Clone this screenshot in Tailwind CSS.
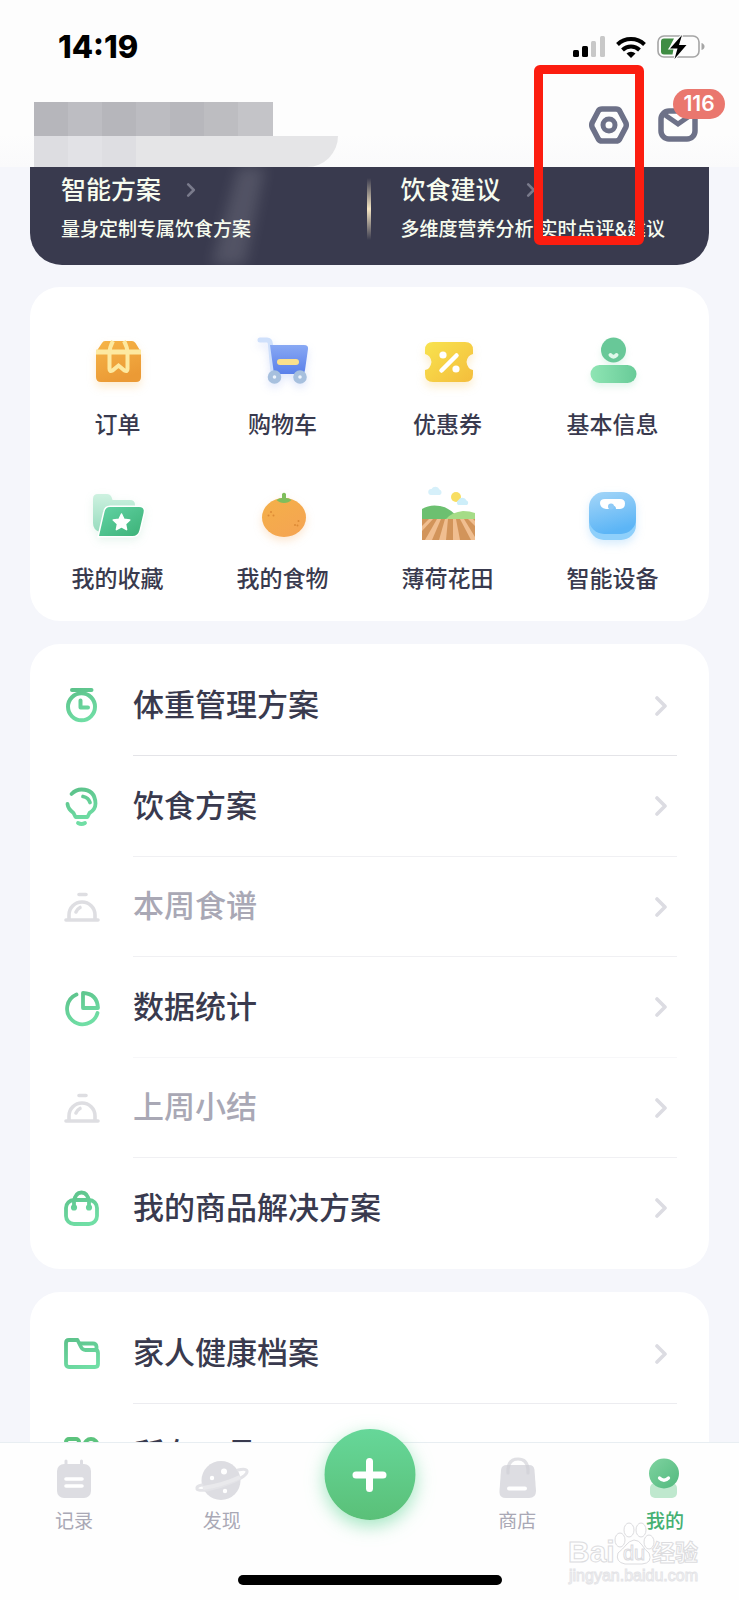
<!DOCTYPE html>
<html lang="zh-CN">
<head>
    <meta charset="UTF-8">
    <meta name="viewport" content="width=device-width, initial-scale=1.0">
    <title>我的</title>
    <script src="https://cdn.jsdelivr.net/npm/@tailwindcss/browser@4"></script>
</head>
<body class="bg-[#f5f6fb] font-['Inter','Noto_Sans_CJK_SC',sans-serif] text-[#393a4e]">
    <!-- Shared gradients and symbols -->
    <svg class="absolute w-0 h-0" aria-hidden="true">
        <defs>
            <linearGradient id="gOrange" x1="0" y1="0" x2="0.4" y2="1"><stop offset="0" stop-color="#f6b548"/><stop offset="1" stop-color="#eb9a35"/></linearGradient>
            <linearGradient id="gBlue" x1="0" y1="0" x2="0" y2="1"><stop offset="0" stop-color="#88a8f4"/><stop offset="1" stop-color="#5a80ea"/></linearGradient>
            <linearGradient id="gYellow" x1="0" y1="0" x2="1" y2="1"><stop offset="0" stop-color="#f8e34e"/><stop offset="1" stop-color="#f4bd3c"/></linearGradient>
            <linearGradient id="gMint" x1="0" y1="0" x2="1" y2="0"><stop offset="0" stop-color="#8fe5b4"/><stop offset="1" stop-color="#68cb98"/></linearGradient>
            <linearGradient id="gFolder" x1="0" y1="0" x2="1" y2="1"><stop offset="0" stop-color="#62d3a4"/><stop offset="1" stop-color="#3cb177"/></linearGradient>
            <linearGradient id="gFolderBack" x1="0" y1="0" x2="0" y2="1"><stop offset="0" stop-color="#cdf1e0"/><stop offset="1" stop-color="#97dcbe"/></linearGradient>
            <linearGradient id="gFruit" x1="0" y1="0" x2="0.7" y2="1"><stop offset="0" stop-color="#f4b048"/><stop offset="1" stop-color="#f5a552"/></linearGradient>
            <linearGradient id="gScale" x1="0" y1="0" x2="0.3" y2="1"><stop offset="0" stop-color="#a5d6f8"/><stop offset="1" stop-color="#5cb5f6"/></linearGradient>
            <linearGradient id="gLine" gradientUnits="userSpaceOnUse" x1="0" y1="0" x2="14" y2="36"><stop offset="0" stop-color="#5abf88"/><stop offset="1" stop-color="#70dea5"/></linearGradient>
            <linearGradient id="gMe" x1="0" y1="0" x2="1" y2="1"><stop offset="0" stop-color="#7fd3a0"/><stop offset="1" stop-color="#52b97e"/></linearGradient>
        </defs>
        <symbol id="chevron" viewBox="0 0 12 20">
            <path d="M2 2l8 8-8 8" fill="none" stroke="currentColor" stroke-width="3.600" stroke-linecap="round" stroke-linejoin="round"/>
        </symbol>
        <symbol id="cloche" viewBox="0 0 36 36">
            <g fill="none" stroke="#dedee2" stroke-width="3.600" stroke-linecap="round">
                <path d="M2 31h32M5 30v-4a13 13 0 0 1 26 0v4"/>
                <path d="M12 23q1-3 4-4.500M15 5.500h7"/>
            </g>
        </symbol>
    </svg>

    <div class="relative flex flex-col h-screen overflow-hidden">
        <header class="shrink-0 bg-[#fdfdfd]">
            <!-- Status bar -->
            <div class="flex items-center justify-between h-[94px] pl-[58px] pr-[34px] text-black">
                <span class="text-[31px] leading-8 font-extrabold">14:19</span>
                <div class="flex items-center gap-[11px]">
                    <svg class="w-8 h-[22px]" viewBox="0 0 32 22">
                        <rect x="0" y="14" width="6" height="7" rx="1.500"/>
                        <rect x="9" y="10" width="6" height="11" rx="1.500"/>
                        <rect x="18" y="5" width="5" height="16" rx="1.500" fill="#c8c8c8"/>
                        <rect x="27" y="0" width="5" height="21" rx="1.500" fill="#c8c8c8"/>
                    </svg>
                    <svg class="w-[30px] h-[22px]" viewBox="0 0 30 22">
                        <g fill="none" stroke="#000" stroke-width="4">
                            <path d="M1.500 8.500a19.500 19.500 0 0 1 27 0"/>
                            <path d="M6.500 14a12.300 12.300 0 0 1 17 0"/>
                        </g>
                        <path d="M15 22l-4.500-4.500a6.500 6.500 0 0 1 9 0z"/>
                    </svg>
                    <svg class="w-12 h-6" viewBox="0 0 48 24">
                        <rect x="1" y="1" width="41" height="21" rx="6" fill="none" stroke="#a5a5a5" stroke-width="1.600"/>
                        <path d="M44.500 8v7q3-1 3-3.500t-3-3.500z" fill="#a5a5a5"/>
                        <path d="M7 3.500h10L11.500 14h5l-1 5.500H7q-3 0-3-3v-10q0-3 3-3z" fill="#3f8c43"/>
                        <path d="M25 0L13 13.500h7.500L17.500 24 29.500 10H22z" stroke="#fdfdfd" stroke-width="2" paint-order="stroke"/>
                    </svg>
                </div>
            </div>
            <!-- Profile row -->
            <div class="flex items-end justify-between h-[73px] pr-[41px] bg-linear-to-b from-[#fdfdfd] from-55% to-[#fafafb]">
                <div class="w-[338px] pl-[34px]">
                    <div class="flex h-[34px]">
                        <span class="w-[34px] bg-[#b6b6bb]"></span>
                        <span class="w-[34px] bg-[#bdbdc2]"></span>
                        <span class="w-[34px] bg-[#b6b6bb]"></span>
                        <span class="w-[34px] bg-[#bcbcc1]"></span>
                        <span class="w-[34px] bg-[#b7b7bc]"></span>
                        <span class="w-[34px] bg-[#bdbdc1]"></span>
                        <span class="w-[35px] bg-[#c4c4c8]"></span>
                    </div>
                    <div class="flex h-[31px] rounded-br-[32px] overflow-hidden bg-[#e5e5e7]">
                        <span class="w-[34px] bg-[#dddde1]"></span>
                        <span class="w-[34px] bg-[#e2e2e6]"></span>
                        <span class="w-[34px] bg-[#dedee2]"></span>
                    </div>
                </div>
                <div class="flex items-center gap-[29px] self-start mt-3 h-[38px]">
                    <button type="button" aria-label="设置">
                        <svg class="w-10 h-[38px]" viewBox="0 0 40 38">
                            <path d="M13 3h14q2.500 0 3.700 2l6 11.500q1.200 2.500 0 5l-6 11.500q-1.200 2-3.700 2H13q-2.500 0-3.700-2l-6-11.500q-1.200-2.500 0-5L9.300 5Q10.500 3 13 3z" fill="none" stroke="#6d7188" stroke-width="5.500"/>
                            <circle cx="20" cy="19" r="6" fill="none" stroke="#6d7188" stroke-width="5"/>
                        </svg>
                    </button>
                    <button type="button" class="relative" aria-label="消息">
                        <svg class="w-10 h-[34px]" viewBox="0 0 40 34">
                            <rect x="3" y="3" width="34" height="28" rx="8" fill="none" stroke="#6d7188" stroke-width="5.500"/>
                            <path d="M7 7l13 9 13-9" fill="none" stroke="#6d7188" stroke-width="5"/>
                        </svg>
                        <span class="absolute left-[15px] -top-[19px] w-[52px] h-[30px] rounded-full bg-[#ea776e] text-white text-[21px] leading-[30px] font-semibold text-center">116</span>
                    </button>
                </div>
            </div>
        </header>

        <main class="flex-1 overflow-hidden px-[30px]">
            <!-- Plan banner -->
            <section class="relative grid grid-cols-2 bg-[#393a4e] rounded-b-[32px] overflow-hidden pt-2 pb-[23px] text-[#f7fcef]">
                <svg class="absolute left-[165px] top-0 w-[90px] h-full blur-[7px]" viewBox="0 0 90 97" preserveAspectRatio="none">
                    <path d="M46 -10h26L48 107H14z" fill="#fff" opacity=".13"/>
                </svg>
                <div class="absolute left-1/2 top-[11px] -ml-[3px] w-1 h-[62px] bg-linear-to-b from-transparent via-[#f6e6c4] to-transparent"></div>
                <a href="#" class="relative pl-[31px]">
                    <div class="flex items-center gap-[25px] text-[25px] leading-[30px] font-medium">智能方案
                        <svg class="w-[10px] h-[14px] text-[#7a7b8c]"><use href="#chevron"/></svg>
                    </div>
                    <p class="mt-[13px] text-[19px] leading-6 font-medium">量身定制专属饮食方案</p>
                </a>
                <a href="#" class="relative pl-[31px] whitespace-nowrap">
                    <div class="flex items-center gap-[25px] text-[25px] leading-[30px] font-medium">饮食建议
                        <svg class="w-[10px] h-[14px] text-[#7a7b8c]"><use href="#chevron"/></svg>
                    </div>
                    <p class="mt-[13px] text-[19px] leading-6 font-medium">多维度营养分析 实时点评&amp;建议</p>
                </a>
            </section>

            <!-- Shortcuts -->
            <section class="grid grid-cols-4 gap-y-[45px] mt-[22px] pl-[5px] pr-[14px] pt-[45px] pb-[26px] bg-white rounded-[30px] text-[23px] leading-8 font-medium">
                <a href="#" class="flex flex-col items-center gap-[17px]">
                    <svg class="w-[60px] h-[60px] drop-shadow-[0_5px_4px_#f6b54840]" viewBox="0 0 60 60">
                        <path d="M17 9h27q2 0 3.500 2L53 20v25q0 5-5 5H13q-5 0-5-5V20l6-9q1-2 3-2z" fill="url(#gOrange)"/>
                        <path d="M8 17.500h45v5H8z" fill="#fde9a0"/>
                        <path d="M25 9q-3.500 6-3.500 13v15q0 3 3 1.500l6-5 6 5q3 1.500 3-1.500V22q0-7-3.500-13" fill="none" stroke="#fde9a0" stroke-width="4"/>
                    </svg>
                    订单
                </a>
                <a href="#" class="flex flex-col items-center gap-[17px]">
                    <svg class="w-[60px] h-[60px] drop-shadow-[0_4px_4px_#5a80ea30]" viewBox="0 0 60 60">
                        <path d="M7 8h7q3 0 3.400 4L20 40" fill="none" stroke="#cfe0fb" stroke-width="5" stroke-linecap="round"/>
                        <path d="M17 13h34q4.500 0 4 4l-3 21q-.5 4-4.500 4H21z" fill="url(#gBlue)"/>
                        <rect x="24" y="27" width="22" height="6" rx="3" fill="#fbe08c"/>
                        <circle cx="21.500" cy="45" r="4.300" fill="#eef4fc" stroke="#a7c0de" stroke-width="5"/>
                        <circle cx="47" cy="45" r="4.300" fill="#eef4fc" stroke="#a7c0de" stroke-width="5"/>
                    </svg>
                    购物车
                </a>
                <a href="#" class="flex flex-col items-center gap-[17px]">
                    <svg class="w-[60px] h-[60px] drop-shadow-[0_5px_4px_#f4bd3c40]" viewBox="0 0 60 60">
                        <path d="M15 10h32q8 0 8 8v4q-5.500 1-6.500 8 1 7 6.500 8v4q0 8-8 8H15q-8 0-8-8v-4q5.500-1 6.500-8-1-7-6.500-8v-4q0-8 8-8z" fill="url(#gYellow)"/>
                        <path d="M23.500 38.500l15-15" stroke="#fff" stroke-width="4.500" stroke-linecap="round"/>
                        <circle cx="25" cy="23" r="3.600" fill="#fff"/>
                        <circle cx="38" cy="37" r="3.600" fill="#fff"/>
                    </svg>
                    优惠券
                </a>
                <a href="#" class="flex flex-col items-center gap-[17px]">
                    <svg class="w-[60px] h-[60px] drop-shadow-[0_4px_3px_#68cb9830]" viewBox="0 0 60 60">
                        <circle cx="30.500" cy="18" r="12.500" fill="#68c898"/>
                        <path d="M27.500 23q3 3.500 6 0" fill="none" stroke="#dff8ea" stroke-width="4" stroke-linecap="round"/>
                        <rect x="7.500" y="33" width="46" height="18" rx="9" fill="url(#gMint)"/>
                    </svg>
                    基本信息
                </a>
                <a href="#" class="flex flex-col items-center gap-[17px]">
                    <svg class="w-[60px] h-[60px] drop-shadow-[0_3px_4px_#3cb17720]" viewBox="0 0 60 60">
                        <path d="M10 8h9q3 0 4.500 3l1 3H42q5 0 5 5v8L12 46q-7-2-7-9V13q0-5 5-5z" fill="url(#gFolderBack)"/>
                        <path d="M22 21h29q6 0 4.500 6l-4 17q-1.500 6-7 6H11l5.500-24q1-5 5.500-5z" fill="url(#gFolder)" stroke="#fff" stroke-width="3" paint-order="stroke"/>
                        <path d="M33.500 28l2.500 5.300 5.800.7-4.300 4 1.100 5.700-5.100-2.800-5.100 2.800 1.100-5.700-4.300-4 5.800-.7z" fill="#fff" stroke="#fff" stroke-width="1.500" stroke-linejoin="round"/>
                    </svg>
                    我的收藏
                </a>
                <a href="#" class="flex flex-col items-center gap-[17px]">
                    <svg class="w-[60px] h-[60px] drop-shadow-[0_4px_4px_#f5a14b40]" viewBox="0 0 60 60">
                        <ellipse cx="31" cy="31.500" rx="22" ry="19.500" fill="url(#gFruit)"/>
                        <path d="M29 8q2-2.500 4 0v4q3 0 5.500 2-3 3-7.500 3t-7.500-3q2.500-2 5.500-2z" fill="#7fbe5c"/>
                        <g fill="#dc8a34"><circle cx="18" cy="26" r="1"/><circle cx="15.500" cy="29.500" r="1"/><circle cx="20.500" cy="29.500" r="1"/><circle cx="45.500" cy="35" r="1"/><circle cx="42" cy="39" r="1"/><circle cx="44.500" cy="39.500" r="1"/></g>
                    </svg>
                    我的食物
                </a>
                <a href="#" class="flex flex-col items-center gap-[17px]">
                    <svg class="w-[60px] h-[60px] overflow-visible" viewBox="0 0 60 60">
                        <path d="M13 9a3 3 0 0 1 .5-6 4.500 4.500 0 0 1 8 .5A3 3 0 0 1 22 9z" fill="#d6f0fa"/>
                        <circle cx="38" cy="11" r="5" fill="#f8de62"/>
                        <path d="M40 19a3 3 0 0 1 .5-5 4.500 4.500 0 0 1 8 .5 2.500 2.500 0 0 1 .5 4.500z" fill="#cdeef9"/>
                        <path d="M4 23q8-5 18-3 8 1 17 10v4H4z" fill="#6cc070"/>
                        <path d="M28 33q6-7 17-8 7 0 12 2v7H28z" fill="#a5dc87"/>
                        <path d="M4 33h53v21H4z" fill="#d2945a"/>
                        <g fill="#f0be90">
                            <path d="M11 33h4L4 45v-5z"/><path d="M19 33h4L14 54H7z"/><path d="M27 33h3l-2 21h-7z"/><path d="M35 33h3l4 21h-7z"/><path d="M42 33h4l11 18v3h-4z"/><path d="M50 33h5l2 2v5z"/>
                        </g>
                    </svg>
                    薄荷花田
                </a>
                <a href="#" class="flex flex-col items-center gap-[17px]">
                    <svg class="w-[60px] h-[60px] drop-shadow-[0_4px_4px_#5cb5f640]" viewBox="0 0 60 60">
                        <rect x="6" y="12" width="47" height="42" rx="15" fill="#8fd0fb"/>
                        <rect x="6" y="6" width="47" height="42" rx="15" fill="url(#gScale)"/>
                        <path d="M22 13h15q5 0 5 4.500 0 5-5 5.500h-4a3.500 3.500 0 0 0-7 0h-3q-6-1-6-6 0-4 5-4z" fill="#fff"/>
                        <circle cx="28" cy="20.500" r="3" fill="#8fcaf6"/>
                    </svg>
                    智能设备
                </a>
            </section>

            <!-- Plans list -->
            <section class="mt-[23px] pt-3 pb-[11px] bg-white rounded-[30px] text-[31px] font-medium">
                <a href="#" class="flex items-center gap-[33px] h-[100px] pl-[34px] pr-8">
                    <svg class="w-9 h-9 overflow-visible" viewBox="0 0 36 36" fill="none" stroke="url(#gLine)" stroke-width="4" stroke-linecap="round" stroke-linejoin="round">
                        <circle cx="17.500" cy="18.800" r="13.500"/><path d="M8 2h19.500M16.500 12.500v7H24"/>
                    </svg>
                    <span class="flex flex-1 items-center justify-between self-stretch pr-[10px] border-b border-[#e4e4e8]">体重管理方案
                        <svg class="w-3 h-5 text-[#dcdce2]"><use href="#chevron"/></svg>
                    </span>
                </a>
                <a href="#" class="flex items-center gap-[33px] h-[101px] pl-[34px] pr-8">
                    <svg class="w-9 h-9 overflow-visible" viewBox="0 0 36 36" fill="none" stroke="url(#gLine)" stroke-width="3.800" stroke-linecap="round" stroke-linejoin="round">
                        <path d="M7.500 5Q12 .5 17.500.5q13.500 0 14 14 0 6-6 9.500L23.500 28h-12l-2-4q-5.500-4-6-9"/><path d="M19 7.500q5.500 1 7 6M14 34q3.500 2 7 0"/>
                    </svg>
                    <span class="flex flex-1 items-center justify-between self-stretch pr-[10px] border-b border-[#f0f0f3]">饮食方案
                        <svg class="w-3 h-5 text-[#dcdce2]"><use href="#chevron"/></svg>
                    </span>
                </a>
                <a href="#" class="flex items-center gap-[33px] h-[100px] pl-[34px] pr-8 text-[#a9a8b5]">
                    <svg class="w-9 h-9"><use href="#cloche"/></svg>
                    <span class="flex flex-1 items-center justify-between self-stretch pr-[10px] border-b border-[#f0f0f3]">本周食谱
                        <svg class="w-3 h-5 text-[#dcdce2]"><use href="#chevron"/></svg>
                    </span>
                </a>
                <a href="#" class="flex items-center gap-[33px] h-[101px] pl-[34px] pr-8">
                    <svg class="w-9 h-9 overflow-visible" viewBox="0 0 36 36" fill="none" stroke="url(#gLine)" stroke-width="3.800" stroke-linecap="round" stroke-linejoin="round">
                        <path d="M12.500 4.500A15.500 15.500 0 1 0 33.500 23"/><path d="M19 3q14 .5 15 15H19z"/>
                    </svg>
                    <span class="flex flex-1 items-center justify-between self-stretch pr-[10px] border-b border-[#f7f7f9]">数据统计
                        <svg class="w-3 h-5 text-[#dcdce2]"><use href="#chevron"/></svg>
                    </span>
                </a>
                <a href="#" class="flex items-center gap-[33px] h-[100px] pl-[34px] pr-8 text-[#a9a8b5]">
                    <svg class="w-9 h-9"><use href="#cloche"/></svg>
                    <span class="flex flex-1 items-center justify-between self-stretch pr-[10px] border-b border-[#f0f0f3]">上周小结
                        <svg class="w-3 h-5 text-[#dcdce2]"><use href="#chevron"/></svg>
                    </span>
                </a>
                <a href="#" class="flex items-center gap-[33px] h-[100px] pl-[34px] pr-8">
                    <svg class="w-9 h-9 overflow-visible" viewBox="0 0 36 36" fill="none" stroke="url(#gLine)" stroke-width="3.800" stroke-linecap="round">
                        <rect x="2" y="10" width="31" height="24" rx="8"/>
                        <path d="M10 17v-5q1-9.500 7.500-9.500T25 12v5"/>
                        <circle cx="10" cy="17.500" r="1.200"/><circle cx="25" cy="17.500" r="1.200"/>
                    </svg>
                    <span class="flex flex-1 items-center justify-between self-stretch pr-[10px]">我的商品解决方案
                        <svg class="w-3 h-5 text-[#dcdce2]"><use href="#chevron"/></svg>
                    </span>
                </a>
            </section>

            <!-- Family and tools -->
            <section class="mt-[23px] pt-3 pb-[11px] bg-white rounded-[30px] text-[31px] font-medium">
                <a href="#" class="flex items-center gap-[33px] h-[100px] pl-[34px] pr-8">
                    <svg class="w-9 h-9 overflow-visible" viewBox="0 0 36 36" fill="none" stroke="url(#gLine)" stroke-width="3.800" stroke-linecap="round" stroke-linejoin="round">
                        <path d="M5 4h8.500l3.500 7q1.500 3 4.500 3H31q3 0 3 3v11q0 3-3 3H5q-3 0-3-3V7q0-3 3-3z"/><path d="M16 7.500h13q3 0 3.500 3V14"/>
                    </svg>
                    <span class="flex flex-1 items-center justify-between self-stretch pr-[10px] border-b border-[#ececf0]">家人健康档案
                        <svg class="w-3 h-5 text-[#dcdce2]"><use href="#chevron"/></svg>
                    </span>
                </a>
                <a href="#" class="flex items-center gap-[33px] h-[100px] pl-[34px] pr-8">
                    <svg class="w-9 h-9 overflow-visible" viewBox="0 0 36 36" fill="none" stroke="#5cc37d" stroke-width="4">
                        <rect x="2" y="3" width="13" height="13" rx="3"/><circle cx="27" cy="9.500" r="6.500"/><rect x="2" y="22" width="13" height="13" rx="3"/><rect x="20" y="22" width="13" height="13" rx="3"/>
                    </svg>
                    <span class="flex flex-1 items-center justify-between self-stretch pr-[10px]">所有工具
                        <svg class="w-3 h-5 text-[#dcdce2]"><use href="#chevron"/></svg>
                    </span>
                </a>
            </section>
        </main>

        <!-- Tab bar -->
        <nav class="relative shrink-0 bg-[#fefefe] border-t border-[#e8eef2]">
            <div class="grid grid-cols-5 pt-[13px] text-[19px] leading-7 text-[#a9a8b5]">
                <a href="#" class="flex flex-col items-center gap-2">
                    <svg class="w-[52px] h-[44px]" viewBox="0 0 52 44">
                        <path d="M18 5v6M33.500 5v6" stroke="#dddde2" stroke-width="3" stroke-linecap="round"/>
                        <rect x="9" y="8" width="34" height="34" rx="7" fill="#dddde2"/>
                        <path d="M18 23h16M18 30h16" stroke="#fff" stroke-width="3.600" stroke-linecap="round"/>
                    </svg>
                    记录
                </a>
                <a href="#" class="flex flex-col items-center gap-2">
                    <svg class="w-[52px] h-[44px] overflow-visible" viewBox="0 0 52 44">
                        <circle cx="25" cy="24.500" r="19.500" fill="#dddde2"/>
                        <circle cx="28" cy="15.500" r="3" fill="#fff"/><circle cx="16" cy="22" r="2.200" fill="#fff"/><circle cx="29" cy="35" r="2.200" fill="#fff"/>
                        <path d="M6 29q-6 1-5 4 1 2 10 1 14-3 28-9 13-6 12-10-1-3-9-1" fill="none" stroke="#e3e3e7" stroke-width="3" stroke-linecap="round"/>
                        <path d="M7 32q20-3 37-11" fill="none" stroke="#e9e9ec" stroke-width="4"/>
                    </svg>
                    发现
                </a>
                <span></span>
                <a href="#" class="flex flex-col items-center gap-2">
                    <svg class="w-[52px] h-[44px]" viewBox="0 0 52 44">
                        <path d="M16 9h22q5 0 5.500 5l1.500 21q0 7-7 7H15q-7 0-6.500-7L10 14q.5-5 6-5z" fill="#dddde2"/>
                        <path d="M17 17v-4q1-10 10-10t10 10v4" fill="none" stroke="#cfcfd6" stroke-opacity=".65" stroke-width="3.200" stroke-linecap="round"/>
                        <path d="M18 32.500h16" stroke="#fff" stroke-width="4" stroke-linecap="round"/>
                    </svg>
                    商店
                </a>
                <a href="#" class="flex flex-col items-center gap-2 font-medium text-[#45b072]">
                    <svg class="w-[52px] h-[44px]" viewBox="0 0 52 44">
                        <rect x="11" y="27" width="27" height="15" rx="5" fill="#bfe8ce"/>
                        <circle cx="25" cy="17.500" r="15" fill="url(#gMe)"/>
                        <path d="M20.500 22q4.500 4.500 9 0" fill="none" stroke="#fff" stroke-width="3.200" stroke-linecap="round"/>
                    </svg>
                    我的
                </a>
            </div>
            <div class="mx-auto mt-[39px] mb-[15px] w-[264px] h-[10px] rounded-full bg-black"></div>
            <button type="button" aria-label="添加" class="absolute left-1/2 -top-[14px] -translate-x-1/2 flex items-center justify-center w-[91px] h-[91px] rounded-full bg-linear-to-b from-[#66d799] to-[#5ac078] shadow-[0_6px_18px_#66d79999]">
                <svg class="w-9 h-9" viewBox="0 0 36 36">
                    <path d="M18 4.500v27M4.500 18h27" stroke="#fff" stroke-width="7" stroke-linecap="round"/>
                </svg>
            </button>
            <!-- Watermark -->
            <svg class="absolute right-[38px] bottom-[14px] w-[136px] h-[68px] pointer-events-none font-['Liberation_Sans','Noto_Sans_CJK_SC',sans-serif]" viewBox="0 0 136 68" fill="#fff" fill-opacity=".8" stroke="#dcdcdf" stroke-width="1">
                <ellipse cx="55" cy="22" rx="5" ry="7"/><ellipse cx="64" cy="12" rx="5" ry="7"/><ellipse cx="76" cy="12" rx="5" ry="7"/><ellipse cx="84" cy="24" rx="5" ry="7"/>
                <path d="M69 22q5 0 8 5t7 8q4 10-7 11H60q-10-2-7-11 5-4 8-8t8-5z"/>
                <text x="3" y="44" font-size="30" font-weight="700">Bai</text>
                <text x="58" y="42" font-size="20">du</text>
                <text x="87" y="43" font-size="23" font-weight="700">经验</text>
                <text x="4" y="63" font-size="16" stroke="#e4e4e7">jingyan.baidu.com</text>
            </svg>
        </nav>

        <!-- Highlight around the settings button -->
        <div class="absolute right-[95px] top-[65px] w-[110px] h-[180px] border-[9px] border-[#fc1d10] rounded-md pointer-events-none"></div>
    </div>
</body>
</html>
